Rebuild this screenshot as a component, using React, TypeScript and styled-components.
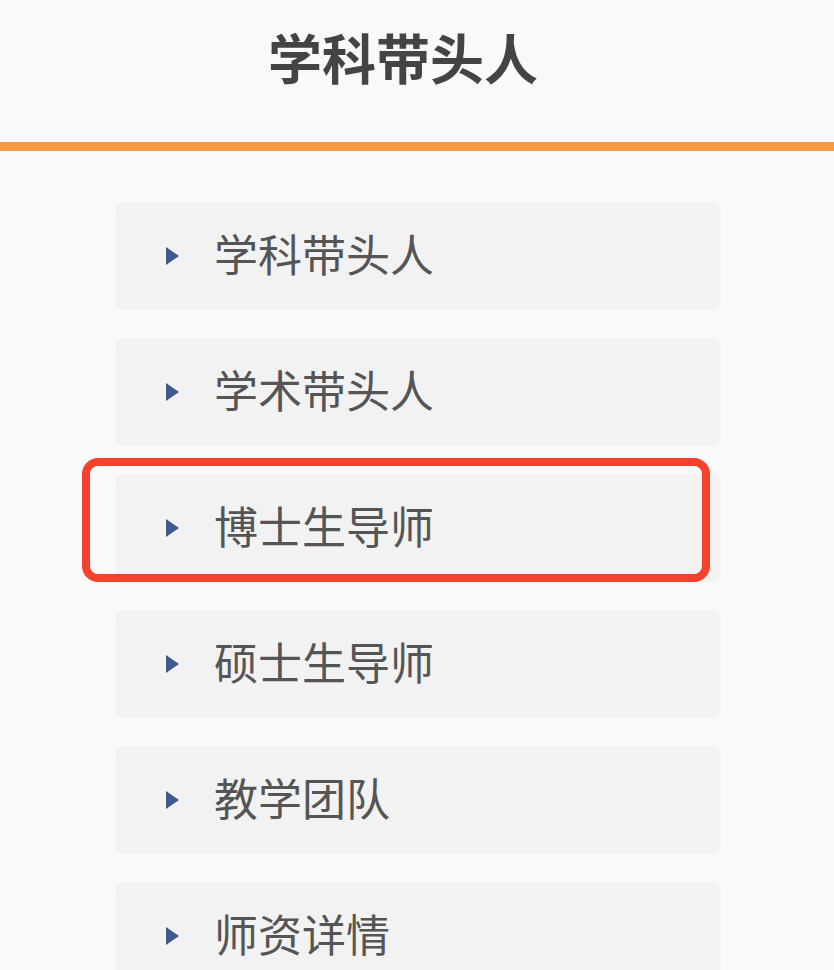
import styled, {createGlobalStyle} from 'styled-components';

const GlobalStyle = createGlobalStyle`
    html, body {
        margin: 0;
        padding: 0;
        background: #f9f9f9;
    }
    body {
        font-family: "Noto Sans CJK SC", "Noto Sans", sans-serif;
    }
`;

const items = ['学科带头人', '学术带头人', '博士生导师', '硕士生导师', '教学团队', '师资详情'];
const highlighted = 2;

export default function App() {
    return (
        <Page>
            <GlobalStyle/>
            <Header>
                <Title>学科带头人</Title>
            </Header>
            <Divider/>
            <List>
                {items.map((label, i) => (
                    <Item key={label}>
                        <Arrow/>
                        <Label>{label}</Label>
                        {i === highlighted && <Marker/>}
                    </Item>
                ))}
            </List>
        </Page>
    );
}

const Page = styled.div`
    width: 834px;
    height: 970px;
    overflow: hidden;
    background: #f9f9f9;
`;

const Header = styled.header`
    height: 142px;
    box-sizing: border-box;
    display: flex;
    align-items: center;
    justify-content: center;
    padding: 0 28px 28px 0;
`;

const Title = styled.h1`
    margin: 0;
    font-size: 54px;
    line-height: 1;
    font-weight: 700;
    color: #444444;
`;

const Divider = styled.div`
    height: 9px;
    background: #f99a45;
`;

const List = styled.div`
    display: flex;
    flex-direction: column;
    gap: 28px;
    padding: 51px 0 0 116px;
`;

const Item = styled.div`
    position: relative;
    width: 604px;
    height: 108px;
    box-sizing: border-box;
    display: flex;
    align-items: center;
    padding: 0 0 6px 50px;
    background: #f2f2f2;
    border-radius: 8px;
    box-shadow: 0 0 2px rgba(0, 0, 0, 0.04);
`;

const Arrow = styled.span`
    width: 0;
    height: 0;
    margin-top: 6px;
    border-top: 9px solid transparent;
    border-bottom: 9px solid transparent;
    border-left: 13px solid #3d5a8a;
`;

const Label = styled.span`
    margin-left: 35px;
    font-size: 44px;
    line-height: 1;
    color: #555555;
`;

const Marker = styled.div`
    position: absolute;
    left: -34px;
    top: -16px;
    width: 628px;
    height: 124px;
    box-sizing: border-box;
    border: 8px solid #f5412d;
    border-radius: 16px;
    pointer-events: none;
`;
